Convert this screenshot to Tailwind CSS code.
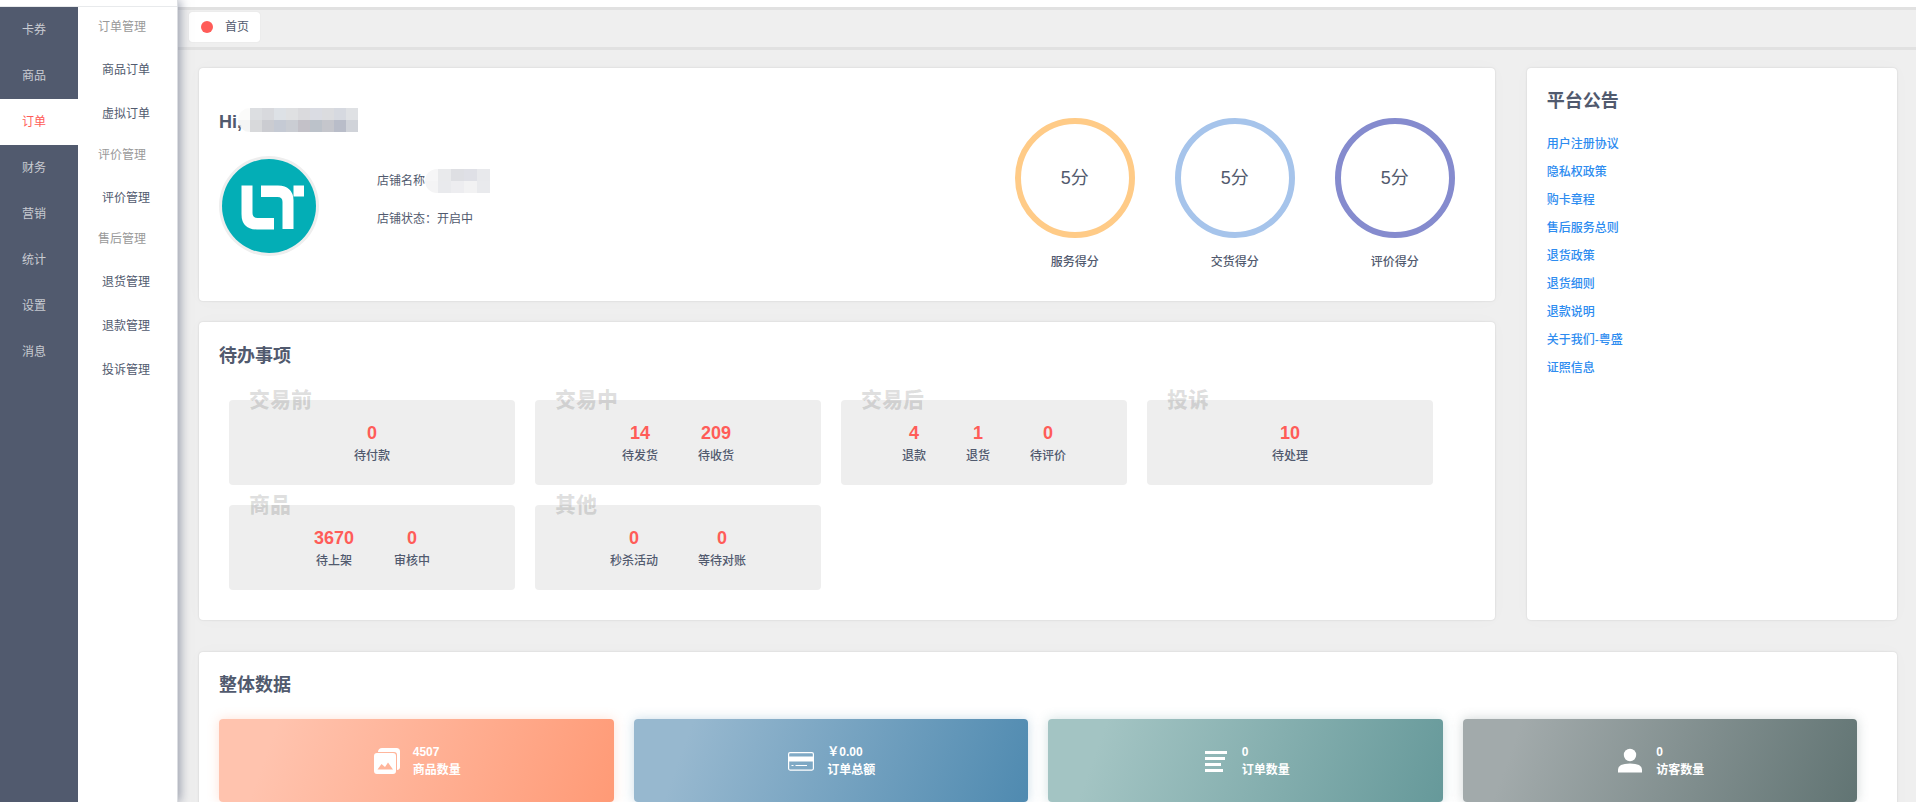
<!DOCTYPE html>
<html lang="zh-CN">
<head>
<meta charset="utf-8">
<meta name="viewport" content="width=device-width, initial-scale=1">
<title>首页</title>
<script src="https://cdn.jsdelivr.net/npm/@tailwindcss/browser@4"></script>
</head>
<body class="flex h-screen overflow-hidden bg-[#efefef] font-['Liberation_Sans','Noto_Sans_CJK_SC',sans-serif] text-xs text-[#515a6e]">
  <!-- Sidebar -->
  <aside class="relative z-10 flex w-[178px] shrink-0 flex-col border-r border-[#dcdee2] bg-white pt-1.5 shadow-[2px_0_10px_rgba(60,70,100,0.5)]">
    <div class="flex flex-1 border-t border-[#e8eaec]">
      <nav aria-label="主菜单" class="flex w-[78px] flex-col bg-[#515a6e] text-white/70">
        <a href="#" class="flex h-[46px] items-center pl-[22px]">卡券</a>
        <a href="#" class="flex h-[46px] items-center pl-[22px]">商品</a>
        <a href="#" aria-current="page" class="flex h-[46px] items-center bg-white pl-[22px] text-[#ff5c58]">订单</a>
        <a href="#" class="flex h-[46px] items-center pl-[22px]">财务</a>
        <a href="#" class="flex h-[46px] items-center pl-[22px]">营销</a>
        <a href="#" class="flex h-[46px] items-center pl-[22px]">统计</a>
        <a href="#" class="flex h-[46px] items-center pl-[22px]">设置</a>
        <a href="#" class="flex h-[46px] items-center pl-[22px]">消息</a>
      </nav>
      <nav aria-label="子菜单" class="flex flex-1 flex-col pt-px">
        <h3 class="h-10 pl-5 leading-[38px] text-[#999999]">订单管理</h3>
        <a href="#" class="flex h-11 items-center pl-6">商品订单</a>
        <a href="#" class="flex h-11 items-center pl-6">虚拟订单</a>
        <h3 class="h-10 pl-5 leading-[38px] text-[#999999]">评价管理</h3>
        <a href="#" class="flex h-11 items-center pl-6">评价管理</a>
        <h3 class="h-10 pl-5 leading-[38px] text-[#999999]">售后管理</h3>
        <a href="#" class="flex h-11 items-center pl-6">退货管理</a>
        <a href="#" class="flex h-11 items-center pl-6">退款管理</a>
        <a href="#" class="flex h-11 items-center pl-6">投诉管理</a>
      </nav>
    </div>
  </aside>

  <div class="flex min-w-0 flex-1 flex-col">
    <header class="h-[7px] shrink-0 bg-white"></header>
    <!-- Open tabs -->
    <div class="flex h-[43px] shrink-0 items-center border-y-[3px] border-[#e1e1e1] pl-[11px]">
      <button type="button" class="mb-1 flex h-[30px] items-center gap-3 rounded-[3px] bg-white pr-[11px] pl-3 shadow-[0_0_1px_rgba(0,0,0,0.15)]">
        <span class="size-3 rounded-full bg-[#ff5c58]"></span>首页
      </button>
    </div>

    <main class="flex min-h-0 flex-1 flex-col gap-8 overflow-hidden pt-[18px] pr-[19px] pl-[21px]">
      <div class="grid shrink-0 grid-cols-[7fr_2fr] gap-8">
        <div class="flex min-w-0 flex-col gap-[21px]">
          <!-- Shop summary -->
          <section class="flex h-[233px] items-start justify-between rounded-sm bg-white pr-10 pl-5 shadow-[0_0_2px_rgba(0,0,0,0.15),0_0_20px_rgba(0,0,0,0.02)]">
            <div class="pt-10">
              <div class="flex h-6 items-center">
                <h1 class="mt-1 w-[31px] text-lg leading-6 font-bold">Hi,</h1>
                <div aria-hidden="true" class="-ml-3 grid w-[120px] grid-cols-10 overflow-hidden rounded-l-xl [&>i]:h-3">
                  <i class="bg-[#f9f9f8]/70"></i><i class="bg-[#dcdee1]"></i><i class="bg-[#d8d9dd]"></i><i class="bg-[#dde1e6]"></i><i class="bg-[#dfe0e2]"></i><i class="bg-[#dadadd]"></i><i class="bg-[#dadce3]"></i><i class="bg-[#dbdcdf]"></i><i class="bg-[#d6d9e0]"></i><i class="bg-[#dfe1e4]"></i>
                  <i class="bg-[#eff1f1]/70"></i><i class="bg-[#d8d9db]"></i><i class="bg-[#cbccd1]"></i><i class="bg-[#c5cad4]"></i><i class="bg-[#cacdd3]"></i><i class="bg-[#c3c1c8]"></i><i class="bg-[#bcc2ca]"></i><i class="bg-[#c5c6cc]"></i><i class="bg-[#b9bdc9]"></i><i class="bg-[#d0d3d9]"></i>
                </div>
              </div>
              <div class="mt-6 flex">
                <svg class="size-[100px]" viewBox="0 0 100 100" role="img" aria-label="店铺标志">
                  <circle cx="50" cy="50" r="50" fill="#eeeeee"/>
                  <circle cx="50" cy="50" r="47" fill="#03aeb6"/>
                  <path fill="#fff" d="M22.500 29.500H33.500V57Q33.500 62 38.500 62H55V73.500H38Q22.500 73.500 22.500 58ZM42 29.500H59Q74 30 74.500 44V73H63.500V46Q63.500 41 58.500 41H42ZM74.500 29.500H85V40.500H74.500Z"/>
                </svg>
                <div class="ml-[58px] flex flex-col gap-[14px] pt-[13px]">
                  <p class="flex h-6 items-center">店铺名称
                    <span aria-hidden="true" class="grid w-[65px] grid-cols-5 overflow-hidden rounded-l-xl [&>i]:h-3">
                      <i class="bg-[#f6f6f7]"></i><i class="bg-[#e9eaec]"></i><i class="bg-[#dedfe3]"></i><i class="bg-[#dfe0e6]"></i><i class="bg-[#e8e9ec]"></i>
                      <i class="bg-[#f4f4f5]"></i><i class="bg-[#e9eaed]"></i><i class="bg-[#ededf0]"></i><i class="bg-[#f2f2f3]"></i><i class="bg-[#e9eaed]"></i>
                    </span>
                  </p>
                  <p class="h-6 leading-6">店铺状态：开启中</p>
                </div>
              </div>
            </div>
            <div class="flex gap-10 pt-[50px] text-center font-medium">
              <div><div class="flex size-[120px] items-center justify-center rounded-full border-6 border-[#ffcb87] text-lg font-normal">5分</div><p class="mt-4 leading-4">服务得分</p></div>
              <div><div class="flex size-[120px] items-center justify-center rounded-full border-6 border-[#a6c4eb] text-lg font-normal">5分</div><p class="mt-4 leading-4">交货得分</p></div>
              <div><div class="flex size-[120px] items-center justify-center rounded-full border-6 border-[#858bce] text-lg font-normal">5分</div><p class="mt-4 leading-4">评价得分</p></div>
            </div>
          </section>

          <!-- To-do items -->
          <section class="rounded-sm bg-white px-5 pt-[22px] pb-[30px] shadow-[0_0_2px_rgba(0,0,0,0.15),0_0_20px_rgba(0,0,0,0.02)]">
            <h2 class="text-lg leading-6 font-bold">待办事项</h2>
            <div class="mt-8 flex flex-wrap gap-5 pl-[10px] font-medium">
              <div class="relative flex h-[85px] w-[286px] justify-center gap-10 rounded bg-[#eeeeee] pt-[21px] text-center">
                <h3 class="absolute -top-3 left-5 text-[21px] leading-6 font-black text-black/12">交易前</h3>
                <div><b class="block text-lg leading-6 text-[#ff5c58]">0</b><span class="block leading-[22px]">待付款</span></div>
              </div>
              <div class="relative flex h-[85px] w-[286px] justify-center gap-10 rounded bg-[#eeeeee] pt-[21px] text-center">
                <h3 class="absolute -top-3 left-5 text-[21px] leading-6 font-black text-black/12">交易中</h3>
                <div><b class="block text-lg leading-6 text-[#ff5c58]">14</b><span class="block leading-[22px]">待发货</span></div>
                <div><b class="block text-lg leading-6 text-[#ff5c58]">209</b><span class="block leading-[22px]">待收货</span></div>
              </div>
              <div class="relative flex h-[85px] w-[286px] justify-center gap-10 rounded bg-[#eeeeee] pt-[21px] text-center">
                <h3 class="absolute -top-3 left-5 text-[21px] leading-6 font-black text-black/12">交易后</h3>
                <div><b class="block text-lg leading-6 text-[#ff5c58]">4</b><span class="block leading-[22px]">退款</span></div>
                <div><b class="block text-lg leading-6 text-[#ff5c58]">1</b><span class="block leading-[22px]">退货</span></div>
                <div><b class="block text-lg leading-6 text-[#ff5c58]">0</b><span class="block leading-[22px]">待评价</span></div>
              </div>
              <div class="relative flex h-[85px] w-[286px] justify-center gap-10 rounded bg-[#eeeeee] pt-[21px] text-center">
                <h3 class="absolute -top-3 left-5 text-[21px] leading-6 font-black text-black/12">投诉</h3>
                <div><b class="block text-lg leading-6 text-[#ff5c58]">10</b><span class="block leading-[22px]">待处理</span></div>
              </div>
              <div class="relative flex h-[85px] w-[286px] justify-center gap-10 rounded bg-[#eeeeee] pt-[21px] text-center">
                <h3 class="absolute -top-3 left-5 text-[21px] leading-6 font-black text-black/12">商品</h3>
                <div><b class="block text-lg leading-6 text-[#ff5c58]">3670</b><span class="block leading-[22px]">待上架</span></div>
                <div><b class="block text-lg leading-6 text-[#ff5c58]">0</b><span class="block leading-[22px]">审核中</span></div>
              </div>
              <div class="relative flex h-[85px] w-[286px] justify-center gap-10 rounded bg-[#eeeeee] pt-[21px] text-center">
                <h3 class="absolute -top-3 left-5 text-[21px] leading-6 font-black text-black/12">其他</h3>
                <div><b class="block text-lg leading-6 text-[#ff5c58]">0</b><span class="block leading-[22px]">秒杀活动</span></div>
                <div><b class="block text-lg leading-6 text-[#ff5c58]">0</b><span class="block leading-[22px]">等待对账</span></div>
              </div>
            </div>
          </section>
        </div>

        <!-- Notices -->
        <section class="min-w-0 rounded-sm bg-white px-5 pt-[21px] shadow-[0_0_2px_rgba(0,0,0,0.15),0_0_20px_rgba(0,0,0,0.02)]">
          <h2 class="text-lg leading-6 font-bold">平台公告</h2>
          <ul class="mt-[17px] font-medium text-[#2d8cf0] [&>li]:leading-7">
            <li><a href="#">用户注册协议</a></li>
            <li><a href="#">隐私权政策</a></li>
            <li><a href="#">购卡章程</a></li>
            <li><a href="#">售后服务总则</a></li>
            <li><a href="#">退货政策</a></li>
            <li><a href="#">退货细则</a></li>
            <li><a href="#">退款说明</a></li>
            <li><a href="#">关于我们-粤盛</a></li>
            <li><a href="#">证照信息</a></li>
          </ul>
        </section>
      </div>

      <!-- Overall figures -->
      <section class="shrink-0 rounded-sm bg-white pt-[21px] pr-10 pb-8 pl-5 shadow-[0_0_2px_rgba(0,0,0,0.15),0_0_20px_rgba(0,0,0,0.02)]">
        <h2 class="text-lg leading-6 font-bold">整体数据</h2>
        <div class="mt-[22px] grid grid-cols-4 gap-5 font-bold text-white">
          <div class="flex h-[83px] items-center justify-center gap-[13px] rounded bg-linear-[110deg,#ffc3ae_14%,#ff9a76] pl-0.5 shadow-[0_0_12px_rgba(255,154,118,0.3)]">
            <svg class="size-[26px]" viewBox="0 0 26 26" fill="none" aria-hidden="true">
              <path fill="#fff" d="M4 3.500Q4.500 0 8 0H22.500Q26 0 26 3.500V19Q26 21.500 23 22V7Q23 4 20 4H4Z"/>
              <path fill="#fff" fill-rule="evenodd" d="M3 5H19Q22 5 22 8V23Q22 26 19 26H3Q0 26 0 23V8Q0 5 3 5ZM3.500 21.500H19L14 14.500L11 19L7.500 16Z"/>
            </svg>
            <div class="leading-[18px]"><div>4507</div><div>商品数量</div></div>
          </div>
          <div class="flex h-[83px] items-center justify-center gap-[13px] rounded bg-linear-[110deg,#97b8cf_14%,#4f8ab0] pl-0.5 shadow-[0_0_12px_rgba(79,138,176,0.3)]">
            <svg class="size-[26px]" viewBox="0 0 26 26" fill="none" aria-hidden="true">
              <rect x=".6" y="4.600" width="24.800" height="17.500" rx="1.500" stroke="#fff" stroke-width="1.200"/>
              <path fill="#fff" d="M1 8.500H25V13.500H1Z"/>
              <path stroke="#fff" d="M3.500 17.500H5.500M7.500 17.500H19"/>
            </svg>
            <div class="leading-[18px]"><div>￥0.00</div><div>订单总额</div></div>
          </div>
          <div class="flex h-[83px] items-center justify-center gap-[13px] rounded bg-linear-[110deg,#a3c4c3_14%,#66999a] pl-0.5 shadow-[0_0_12px_rgba(102,153,154,0.3)]">
            <svg class="size-[26px]" viewBox="0 0 26 26" aria-hidden="true">
              <path fill="#fff" d="M2 3H24V6H2ZM2 9H22V12H2ZM2 15H18V18H2ZM2 21H20V24H2Z"/>
            </svg>
            <div class="leading-[18px]"><div>0</div><div>订单数量</div></div>
          </div>
          <div class="flex h-[83px] items-center justify-center gap-[13px] rounded bg-linear-[110deg,#a2aaab_14%,#617473] pl-0.5 shadow-[0_0_12px_rgba(97,116,115,0.3)]">
            <svg class="size-[26px]" viewBox="0 0 26 26" aria-hidden="true">
              <circle cx="13" cy="7" r="6.200" fill="#fff"/>
              <path fill="#fff" d="M1 24.500V21.500Q1 15.500 13 15.500T25 21.500V24.500Z"/>
            </svg>
            <div class="leading-[18px]"><div>0</div><div>访客数量</div></div>
          </div>
        </div>
      </section>
    </main>
  </div>
</body>
</html>
